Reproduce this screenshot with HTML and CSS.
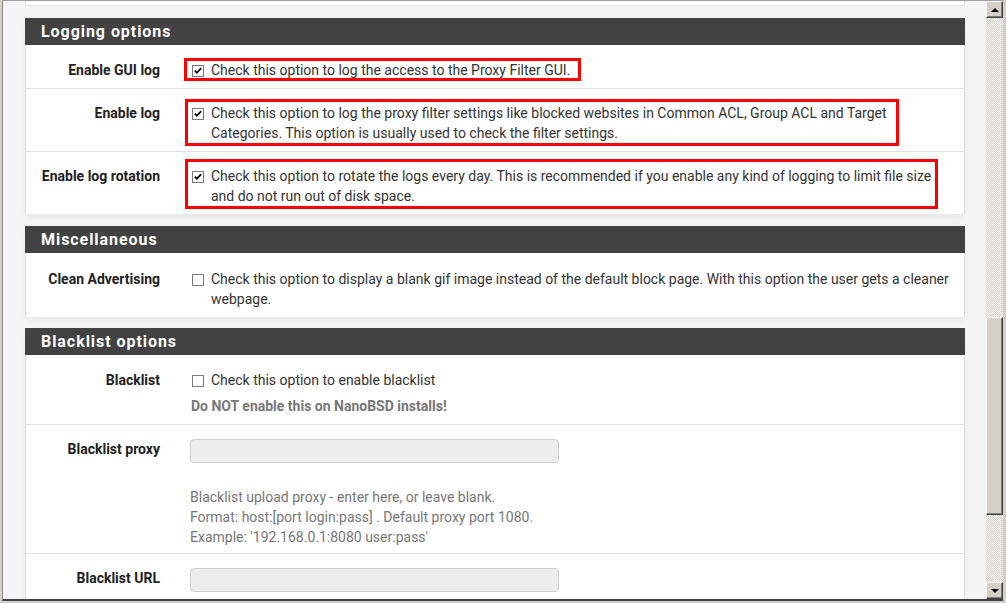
FILE: index.html
```html
<!DOCTYPE html>
<html>
<head>
<meta charset="utf-8">
<link rel="stylesheet" href="styles.css">
</head>
<body>
<div class="window">
  <div class="frame">
    <div class="viewport">
      <div class="stub"></div>

      <section class="panel">
        <h2 class="panel-title">Logging options</h2>
        <div class="panel-body">
          <div class="row">
            <div class="lbl">Enable GUI log</div>
            <div class="ctl">
              <label class="chk">
                <svg class="box" width="12" height="12" viewBox="0 0 12 12"><rect x="0.5" y="0.5" width="11" height="11" fill="#fff" stroke="#7a7a7a"/><path d="M2.8 5.6 L4.9 7.7 L9.2 3.2" fill="none" stroke="#000" stroke-width="1.7"/></svg>
                <span class="txt">Check this option to log the access to the Proxy Filter GUI.</span>
              </label>
              <span class="mark mark-1"></span>
            </div>
          </div>
          <div class="row">
            <div class="lbl">Enable log</div>
            <div class="ctl">
              <label class="chk">
                <svg class="box" width="12" height="12" viewBox="0 0 12 12"><rect x="0.5" y="0.5" width="11" height="11" fill="#fff" stroke="#7a7a7a"/><path d="M2.8 5.6 L4.9 7.7 L9.2 3.2" fill="none" stroke="#000" stroke-width="1.7"/></svg>
                <span class="txt">Check this option to log the proxy filter settings like blocked websites in Common ACL, Group ACL and Target Categories. This option is usually used to check the filter settings.</span>
              </label>
              <span class="mark mark-2"></span>
            </div>
          </div>
          <div class="row">
            <div class="lbl">Enable log rotation</div>
            <div class="ctl">
              <label class="chk">
                <svg class="box" width="12" height="12" viewBox="0 0 12 12"><rect x="0.5" y="0.5" width="11" height="11" fill="#fff" stroke="#7a7a7a"/><path d="M2.8 5.6 L4.9 7.7 L9.2 3.2" fill="none" stroke="#000" stroke-width="1.7"/></svg>
                <span class="txt">Check this option to rotate the logs every day. This is recommended if you enable any kind of logging to limit file size and do not run out of disk space.</span>
              </label>
              <span class="mark mark-3"></span>
            </div>
          </div>
        </div>
      </section>

      <section class="panel">
        <h2 class="panel-title">Miscellaneous</h2>
        <div class="panel-body panel-body-low">
          <div class="row">
            <div class="lbl">Clean Advertising</div>
            <div class="ctl">
              <label class="chk">
                <svg class="box" width="12" height="12" viewBox="0 0 12 12"><rect x="0.5" y="0.5" width="11" height="11" fill="#fff" stroke="#7a7a7a"/></svg>
                <span class="txt">Check this option to display a blank gif image instead of the default block page. With this option the user gets a cleaner webpage.</span>
              </label>
            </div>
          </div>
        </div>
      </section>

      <section class="panel">
        <h2 class="panel-title">Blacklist options</h2>
        <div class="panel-body">
          <div class="row">
            <div class="lbl">Blacklist</div>
            <div class="ctl">
              <label class="chk">
                <svg class="box" width="12" height="12" viewBox="0 0 12 12"><rect x="0.5" y="0.5" width="11" height="11" fill="#fff" stroke="#7a7a7a"/></svg>
                <span class="txt">Check this option to enable blacklist</span>
              </label>
              <div class="help help-bold">Do NOT enable this on NanoBSD installs!</div>
            </div>
          </div>
          <div class="row row-tight">
            <div class="lbl">Blacklist proxy</div>
            <div class="ctl">
              <input class="field" type="text" disabled>
              <div class="help help-spaced">Blacklist upload proxy - enter here, or leave blank.<br>Format: host:[port login:pass] . Default proxy port 1080.<br>Example: '192.168.0.1:8080 user:pass'</div>
            </div>
          </div>
          <div class="row">
            <div class="lbl">Blacklist URL</div>
            <div class="ctl">
              <input class="field" type="text" disabled>
            </div>
          </div>
        </div>
      </section>
    </div>

    <div class="scrollbar">
      <div class="sb-btn"><span class="tri tri-up"></span></div>
      <div class="sb-track">
        <div class="sb-space sb-space-top"></div>
        <div class="sb-thumb"></div>
        <div class="sb-space sb-space-fill"></div>
      </div>
      <div class="sb-btn"><span class="tri tri-down"></span></div>
    </div>
  </div>
</div>
</body>
</html>
```

FILE: styles.css
```css
* { box-sizing: border-box; }

html, body {
  margin: 0;
  padding: 0;
}

body {
  font-family: Roboto, "Liberation Sans", sans-serif;
  font-size: 14px;
  line-height: 20px;
  color: #333;
  background: #d4d0c8;
}

.window {
  width: 1006px;
  height: 603px;
  background: #d4d0c8;
  padding: 0 3px 2px 2px;
  overflow: hidden;
}

.frame {
  display: flex;
  height: 601px;
  border-left: 1px solid #8c8c8c;
  border-top: 1px solid #9c9c9c;
  border-bottom: 2px solid #404040;
}

.viewport {
  width: 983px;
  height: 598px;
  overflow: hidden;
  background: #f5f5f5;
  padding: 0 21px 0 22px;
}

.stub {
  height: 5px;
  background: #fff;
  border: 1px solid #e2e2e2;
  border-top: 0;
  margin-bottom: 12px;
  box-shadow: 0 5px 8px -2px rgba(0, 0, 0, 0.07);
}

.panel {
  background: #fff;
  border-left: 1px solid #dedede;
  border-right: 1px solid #dedede;
  margin-bottom: 12px;
  box-shadow: 0 5px 8px -2px rgba(0, 0, 0, 0.07);
}

.panel-title {
  margin: 0 -1px;
  height: 27px;
  background: #424242;
  color: #fff;
  font-size: 16px;
  font-weight: 700;
  line-height: 27px;
  padding-left: 16px;
  letter-spacing: 0.95px;
}

.panel-body {
  padding-top: 1px;
}

.panel-body-low {
  padding-top: 2px;
  margin-bottom: -1px;
}

.row {
  display: grid;
  grid-template-columns: 134px 1fr;
  column-gap: 30px;
  padding: 14px 11px 8px 0;
  border-bottom: 1px solid #e2e2e2;
}

.row:last-child {
  border-bottom: 0;
}

.row-tight {
  padding-bottom: 6px;
}

.lbl {
  text-align: right;
  font-weight: 700;
  color: #212121;
}

.ctl {
  position: relative;
}

.chk {
  display: flex;
  align-items: flex-start;
}

.box {
  flex: none;
  margin: 5px 7px 0 2px;
}

.txt {
  flex: 1;
}

.help {
  color: #777;
  margin-top: 6px;
}

.help-bold {
  font-weight: 700;
  padding-left: 1px;
}

.help-spaced {
  margin-top: 24px;
}

.field {
  display: block;
  width: 369px;
  height: 24px;
  margin: 0;
  border: 1px solid #cfcfcf;
  border-radius: 4px;
  background: #ededed;
}

/* annotation rectangles drawn over the screenshot */
.mark {
  position: absolute;
  border: 3px solid #ff0000;
  pointer-events: none;
}

.mark-1 {
  left: -6px;
  top: -2px;
  width: 397px;
  height: 23px;
}

.mark-2 {
  left: -5px;
  top: -4px;
  width: 714px;
  height: 47px;
}

.mark-3 {
  left: -5px;
  top: -7px;
  width: 753px;
  height: 50px;
}

/* classic scrollbar */
.scrollbar {
  width: 17px;
  height: 598px;
  display: flex;
  flex-direction: column;
  background: #f3f3f3;
}

.sb-btn {
  height: 17px;
  flex: none;
  display: flex;
  align-items: center;
  justify-content: center;
  background: #d4d0c8;
  border-top: 1px solid #fff;
  border-left: 1px solid #fff;
  border-right: 1px solid #404040;
  border-bottom: 1px solid #404040;
  box-shadow: inset -1px -1px 0 #808080;
}

.tri {
  width: 0;
  height: 0;
  border-left: 4px solid transparent;
  border-right: 4px solid transparent;
}

.tri-up {
  border-bottom: 4px solid #000;
}

.tri-down {
  border-top: 4px solid #000;
}

.sb-track {
  flex: 1;
  display: flex;
  flex-direction: column;
}

.sb-space {
  background-color: #fff;
  background-image: repeating-conic-gradient(#d4d0c8 0 25%, #fff 0 50%);
  background-size: 2px 2px;
}

.sb-space-top {
  height: 299px;
  flex: none;
}

.sb-space-fill {
  flex: 1;
}

.sb-thumb {
  height: 198px;
  flex: none;
  background: #d4d0c8;
  border-top: 1px solid #fff;
  border-left: 1px solid #fff;
  border-right: 1px solid #404040;
  border-bottom: 1px solid #404040;
  box-shadow: inset -1px -1px 0 #808080;
}
```
